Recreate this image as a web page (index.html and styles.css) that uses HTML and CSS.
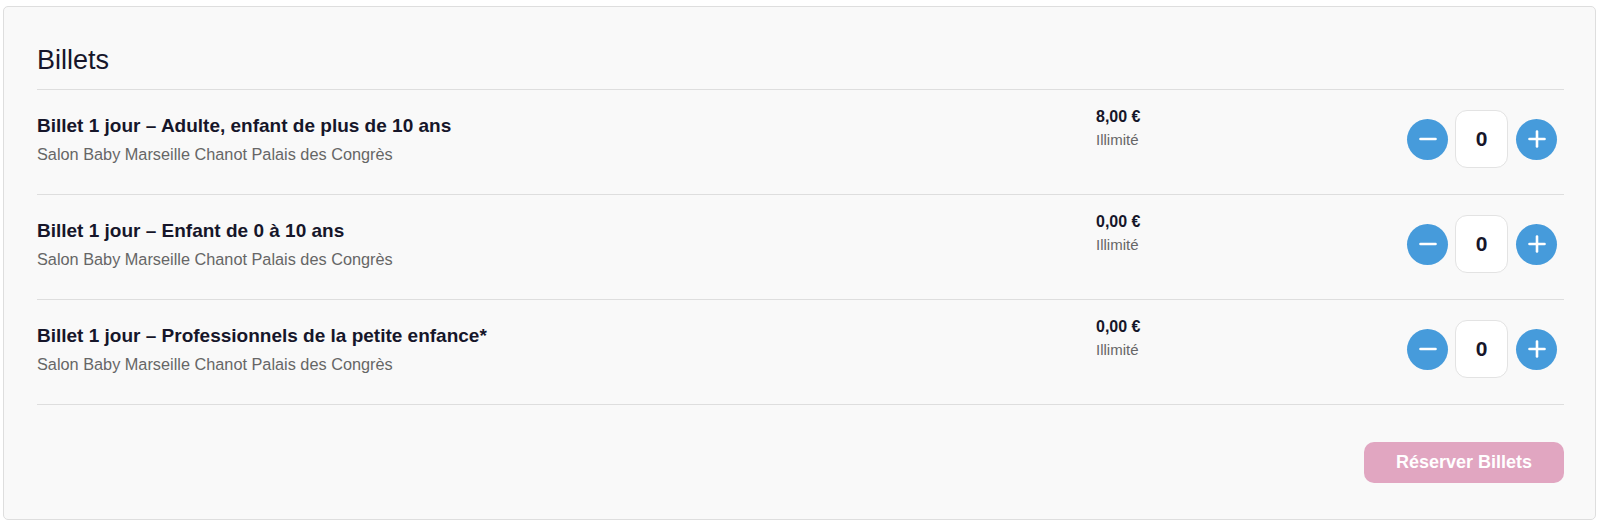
FILE: index.html
```html
<!DOCTYPE html>
<html lang="fr">
<head>
  <meta charset="UTF-8" />
  <meta name="viewport" content="width=device-width, initial-scale=1" />
  <title>Billets</title>
  <link rel="stylesheet" href="styles.css">
</head>
<body>

  <section class="tickets">
    <h2 class="tickets-title">Billets</h2>

    <div class="ticket">
      <div class="ticket-info">
        <p class="ticket-name">Billet 1 jour – Adulte, enfant de plus de 10 ans</p>
        <p class="ticket-venue">Salon Baby Marseille Chanot Palais des Congrès</p>
      </div>
      <div class="ticket-price">
        <p class="price">8,00 €</p>
        <p class="stock">Illimité</p>
      </div>
      <div class="stepper">
        <button class="step" aria-label="Moins">
          <svg width="18" height="18" viewBox="0 0 18 18"><line x1="1.5" y1="9" x2="16.5" y2="9" /></svg>
        </button>
        <div class="qty">0</div>
        <button class="step" aria-label="Plus">
          <svg width="18" height="18" viewBox="0 0 18 18"><line x1="1.5" y1="9" x2="16.5" y2="9" /><line x1="9" y1="1.5" x2="9" y2="16.5" /></svg>
        </button>
      </div>
    </div>

    <div class="ticket">
      <div class="ticket-info">
        <p class="ticket-name">Billet 1 jour – Enfant de 0 à 10 ans</p>
        <p class="ticket-venue">Salon Baby Marseille Chanot Palais des Congrès</p>
      </div>
      <div class="ticket-price">
        <p class="price">0,00 €</p>
        <p class="stock">Illimité</p>
      </div>
      <div class="stepper">
        <button class="step" aria-label="Moins">
          <svg width="18" height="18" viewBox="0 0 18 18"><line x1="1.5" y1="9" x2="16.5" y2="9" /></svg>
        </button>
        <div class="qty">0</div>
        <button class="step" aria-label="Plus">
          <svg width="18" height="18" viewBox="0 0 18 18"><line x1="1.5" y1="9" x2="16.5" y2="9" /><line x1="9" y1="1.5" x2="9" y2="16.5" /></svg>
        </button>
      </div>
    </div>

    <div class="ticket">
      <div class="ticket-info">
        <p class="ticket-name">Billet 1 jour – Professionnels de la petite enfance*</p>
        <p class="ticket-venue">Salon Baby Marseille Chanot Palais des Congrès</p>
      </div>
      <div class="ticket-price">
        <p class="price">0,00 €</p>
        <p class="stock">Illimité</p>
      </div>
      <div class="stepper">
        <button class="step" aria-label="Moins">
          <svg width="18" height="18" viewBox="0 0 18 18"><line x1="1.5" y1="9" x2="16.5" y2="9" /></svg>
        </button>
        <div class="qty">0</div>
        <button class="step" aria-label="Plus">
          <svg width="18" height="18" viewBox="0 0 18 18"><line x1="1.5" y1="9" x2="16.5" y2="9" /><line x1="9" y1="1.5" x2="9" y2="16.5" /></svg>
        </button>
      </div>
    </div>

    <div class="actions">
      <button class="book" disabled>Réserver Billets</button>
    </div>
  </section>

</body>
</html>
```

FILE: styles.css
```css
:root {
  --bg-color: #fff;
  --card-bg: #f9f9f9;
  --line: #dedede;
  --text-color: #16162a;
  --muted: #666;
  --blue: #469bdb;
  --pink: #e1a6c1;
}

body {
  font-family: 'Liberation Sans', Arial, sans-serif;
  background: var(--bg-color);
  color: var(--text-color);
  margin: 0;
  padding: 6px 4px 0 3px;
}

p {
  margin: 0;
}

.tickets {
  background: var(--card-bg);
  border: 1px solid var(--line);
  border-radius: 5px;
  padding: 37px 31px 36px 33px;
}

.tickets-title {
  font-size: 27px;
  font-weight: 400;
  line-height: 32px;
  margin: 0;
  padding-bottom: 13px;
  border-bottom: 1px solid var(--line);
}

.ticket {
  display: grid;
  grid-template-columns: 1fr 311px 151px;
  align-items: start;
  padding: 18px 6px 26px 0;
  border-bottom: 1px solid var(--line);
}

.ticket-info {
  padding-top: 6px;
}

.ticket-name {
  font-size: 19px;
  font-weight: 700;
  line-height: 24px;
}

.ticket-venue {
  font-size: 16.3px;
  line-height: 20px;
  color: var(--muted);
  margin-top: 6px;
}

.price {
  font-size: 16px;
  font-weight: 700;
  line-height: 18px;
}

.stock {
  font-size: 15px;
  line-height: 18px;
  color: var(--muted);
  margin-top: 5px;
}

.stepper {
  display: flex;
  align-items: center;
  margin-top: 2px;
}

.step {
  width: 41px;
  height: 41px;
  border: none;
  border-radius: 50%;
  background: var(--blue);
  padding: 0;
  display: flex;
  align-items: center;
  justify-content: center;
  cursor: pointer;
}

.step svg line {
  stroke: #fff;
  stroke-width: 2.6;
  stroke-linecap: round;
}

.qty {
  width: 53px;
  height: 58px;
  box-sizing: border-box;
  margin: 0 8px 0 7px;
  background: #fff;
  border: 1px solid #e3e3e3;
  border-radius: 12px;
  display: flex;
  align-items: center;
  justify-content: center;
  font-size: 21px;
  font-weight: 700;
}

.actions {
  display: flex;
  justify-content: flex-end;
  margin-top: 37px;
}

.book {
  width: 200px;
  height: 41px;
  border: none;
  border-radius: 10px;
  background: var(--pink);
  color: #fff;
  font-family: inherit;
  font-size: 18px;
  font-weight: 700;
}
```
